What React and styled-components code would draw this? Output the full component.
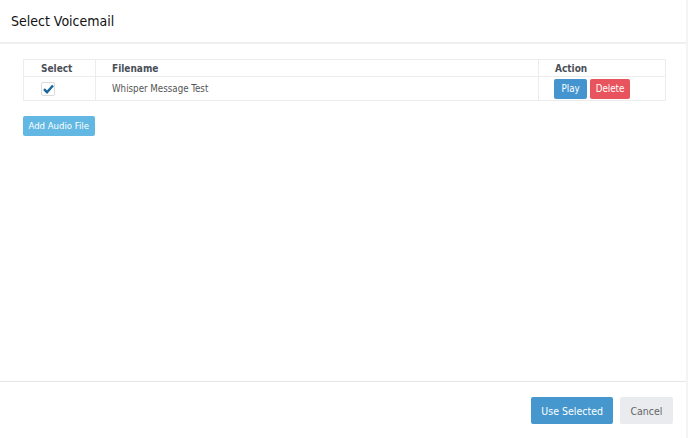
import styled, { createGlobalStyle } from 'styled-components';

const GlobalStyle = createGlobalStyle`
  html, body { margin: 0; padding: 0; background: #fff; }
  body { font-family: "DejaVu Sans Condensed", "Liberation Sans", Arial, sans-serif; }
  * { box-sizing: border-box; }
`;

const Modal = styled.div`
  width: 688px;
  height: 438px;
  display: flex;
  flex-direction: column;
  background: #fff;
  border-right: 2px solid #f4f4f4;
`;

const Header = styled.div`
  height: 44px;
  display: flex;
  align-items: center;
  padding: 0 11px 1px;
  border-bottom: 2px solid #f0f0f0;
  h3 {
    margin: 0;
    font-size: 14px;
    font-weight: normal;
    color: #111;
  }
`;

const Body = styled.div`
  flex: 1;
  padding: 15px 20px 0 23px;
`;

const Table = styled.table`
  width: 100%;
  border-collapse: collapse;
  border: 1px solid #ececec;
  font-size: 9.7px;
  color: #555;
  th {
    height: 17px;
    padding: 0;
    font-size: 10px;
    font-weight: bold;
    color: #4a4f58;
    text-align: left;
    border-right: 1px solid #ececec;
    border-bottom: 1px solid #ececec;
  }
  td {
    height: 24px;
    padding: 0;
    border-right: 1px solid #ececec;
  }
`;

const SelectCol = styled.th`
  width: 72px;
  padding-left: 17px !important;
`;

const NameCell = styled.td`
  padding-left: 16px !important;
`;

const PadHead = styled.th`
  padding-left: 16px !important;
`;

const ActionHead = styled.th`
  width: 127px;
  padding-left: 16px !important;
`;

const Actions = styled.div`
  display: flex;
  gap: 3px;
  padding-left: 15px;
`;

const CheckCell = styled.td`
  padding-left: 17px !important;
  vertical-align: middle;
`;

const Check = styled.span`
  display: flex;
  align-items: center;
  justify-content: center;
  width: 14px;
  height: 14px;
  border: 1px solid #dcdcdc;
  border-radius: 2px;
  background: #fff;
`;

const Btn = styled.button`
  border: none;
  border-radius: 2px;
  font-family: inherit;
  color: ${p => p.$text || '#fff'};
  background: ${p => p.$bg};
  font-size: ${p => p.$size || '9.7px'};
  height: ${p => p.$h || '20px'};
  padding: 0 ${p => p.$px || '6.5px'};
  cursor: pointer;
`;

const AddRow = styled.div`
  margin-top: 13px;
`;

const Footer = styled.div`
  height: 57px;
  border-top: 1px solid #e6e6e6;
  background: #fff;
  display: flex;
  justify-content: flex-end;
  gap: 7px;
  padding: 15px 13px 0 0;
`;

export default function App() {
  return (
    <>
      <GlobalStyle />
      <Modal>
        <Header>
          <h3>Select Voicemail</h3>
        </Header>
        <Body>
          <Table>
            <thead>
              <tr>
                <SelectCol>Select</SelectCol>
                <PadHead>Filename</PadHead>
                <ActionHead>Action</ActionHead>
              </tr>
            </thead>
            <tbody>
              <tr>
                <CheckCell>
                  <Check>
                    <svg width="11" height="10" viewBox="0 0 11 10">
                      <path d="M1 5.2 L4 8.2 L10 1.5" fill="none" stroke="#17679c" strokeWidth="2.4" />
                    </svg>
                  </Check>
                </CheckCell>
                <NameCell>Whisper Message Test</NameCell>
                <td>
                  <Actions>
                    <Btn $bg="#4394cf" $px="7.5px">Play</Btn>
                    <Btn $bg="#e8545d" $px="5.5px">Delete</Btn>
                  </Actions>
                </td>
              </tr>
            </tbody>
          </Table>
          <AddRow>
            <Btn $bg="#62b8e3" $size="9.5px" $px="5.5px">Add Audio File</Btn>
          </AddRow>
        </Body>
        <Footer>
          <Btn $bg="#4597cd" $h="27px" $px="10px" $size="10.5px">Use Selected</Btn>
          <Btn $bg="#e9ebee" $text="#666" $h="27px" $px="10.5px" $size="10.5px">Cancel</Btn>
        </Footer>
      </Modal>
    </>
  );
}
